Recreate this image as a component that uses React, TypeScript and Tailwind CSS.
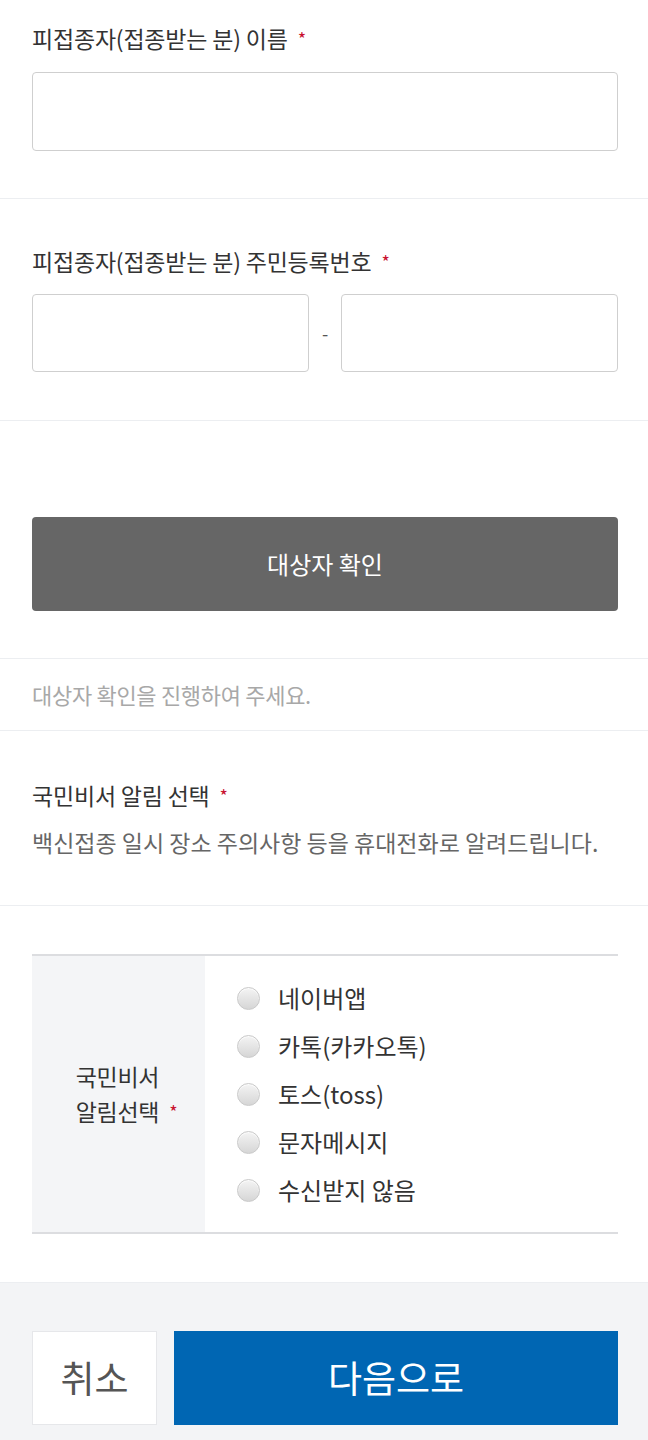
import React from "react";

const FONT = "font-['Noto_Sans_CJK_KR','Noto_Sans',sans-serif]";

const Star = () => <span className="relative top-[-2px] ml-[10px] text-[18px] leading-none text-[#c8102e]">*</span>;

const Label: React.FC<{ children: React.ReactNode }> = ({ children }) => (
  <div className="text-[23px] leading-[28px] tracking-[-0.2px] text-[#333]">
    {children}
    <Star />
  </div>
);

const OPTIONS = ["네이버앱", "카톡(카카오톡)", "토스(toss)", "문자메시지", "수신받지 않음"];

const Radio = () => (
  <span className="block h-[23px] w-[23px] shrink-0 rounded-full border border-[#c9c9c9] bg-gradient-to-b from-[#f4f4f4] to-[#d6d6d6] shadow-[inset_0_1px_1px_rgba(255,255,255,0.8)]" />
);

export default function App() {
  return (
    <div className={`${FONT} w-[648px] bg-white`}>
      <section className="border-b border-[#eceef1] pl-8 pr-[30px] pt-[24px] pb-[47px]">
        <Label>피접종자(접종받는 분) 이름</Label>
        <div className="mt-[20px] h-[79px] rounded-[4px] border border-[#cfcfcf] bg-white" />
      </section>

      <section className="border-b border-[#eceef1] pl-8 pr-[30px] pt-[48px] pb-[48px]">
        <Label>피접종자(접종받는 분) 주민등록번호</Label>
        <div className="mt-[19px] flex items-center">
          <div className="h-[78px] w-[277px] rounded-[4px] border border-[#cfcfcf]" />
          <span className="flex-1 text-center text-[18px] text-[#555]">-</span>
          <div className="h-[78px] w-[277px] rounded-[4px] border border-[#cfcfcf]" />
        </div>
      </section>

      <section className="border-b border-[#eceef1] pl-8 pr-[30px] pt-[96px] pb-[47px]">
        <button className="flex h-[94px] w-full items-center justify-center rounded-[4px] bg-[#666666] text-[24px] text-white">
          대상자 확인
        </button>
      </section>

      <section className="border-b border-[#eceef1] pl-8 pr-[30px] pt-[21px] pb-[22px]">
        <p className="text-[22px] leading-[28px] tracking-[-0.3px] text-[#a8a8a8]">대상자 확인을 진행하여 주세요.</p>
      </section>

      <section className="border-b border-[#eceef1] pl-8 pr-[30px] pt-[50px] pb-[49px]">
        <Label>국민비서 알림 선택</Label>
        <p className="mt-[19px] text-[23px] leading-[28px] tracking-[0px] text-[#666]">
          백신접종 일시 장소 주의사항 등을 휴대전화로 알려드립니다.
        </p>
      </section>

      <section className="pl-8 pr-[30px] pt-[48px] pb-[48px]">
        <div className="flex border-t-2 border-b-2 border-[#dcdde0]">
          <div className="flex w-[173px] items-center justify-center bg-[#f4f5f7] pl-[16px] text-[23px] leading-[35px] tracking-[-0.3px] text-[#333]">
            <div>
              국민비서
              <br />
              알림선택
              <Star />
            </div>
          </div>
          <ul className="flex-1 pt-[18px] pb-[18px] pl-[32px]">
            {OPTIONS.map((o) => (
              <li key={o} className="flex h-[48px] items-center gap-[18px] text-[24px] text-[#333]">
                <Radio />
                {o}
              </li>
            ))}
          </ul>
        </div>
      </section>

      <footer className="flex h-[159px] gap-[17px] border-t border-[#eceef1] bg-[#f3f4f6] pl-8 pr-[30px] pt-[48px]">
        <button className="flex h-[94px] w-[125px] items-center justify-center border border-[#e6e7ea] bg-white text-[37px] text-[#555]">
          취소
        </button>
        <button className="flex h-[94px] flex-1 items-center justify-center bg-[#0066b3] text-[37px] text-white">
          다음으로
        </button>
      </footer>
    </div>
  );
}
